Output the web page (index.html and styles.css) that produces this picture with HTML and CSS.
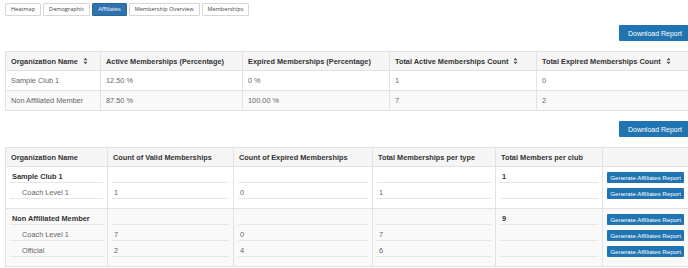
FILE: index.html
```html
<!DOCTYPE html>
<html lang="en">
<head>
    <meta charset="UTF-8">
    <meta name="viewport" content="width=device-width, initial-scale=1.0">
    <title>Affiliates</title>
    <link rel="stylesheet" href="styles.css">
</head>
<body>
    <div class="tabs">
        <button class="tab">Heatmap</button>
        <button class="tab">Demographic</button>
        <button class="tab active">Affiliates</button>
        <button class="tab">Membership Overview</button>
        <button class="tab">Memberships</button>
    </div>

    <div class="toolbar">
        <button class="download-button">Download Report</button>
    </div>

    <!-- Summary table -->
    <table class="report summary">
        <colgroup>
            <col style="width:95px">
            <col style="width:142px">
            <col style="width:147px">
            <col style="width:147px">
            <col>
        </colgroup>
        <thead>
            <tr>
                <th>Organization Name <span class="sort"><svg viewBox="0 0 5 8" width="5" height="8"><path d="M0.5 3.2 L2.5 0.8 L4.5 3.2 Z M0.5 4.8 L2.5 7.2 L4.5 4.8 Z"/></svg></span></th>
                <th>Active Memberships (Percentage)</th>
                <th>Expired Memberships (Percentage)</th>
                <th>Total Active Memberships Count <span class="sort"><svg viewBox="0 0 5 8" width="5" height="8"><path d="M0.5 3.2 L2.5 0.8 L4.5 3.2 Z M0.5 4.8 L2.5 7.2 L4.5 4.8 Z"/></svg></span></th>
                <th>Total Expired Memberships Count <span class="sort"><svg viewBox="0 0 5 8" width="5" height="8"><path d="M0.5 3.2 L2.5 0.8 L4.5 3.2 Z M0.5 4.8 L2.5 7.2 L4.5 4.8 Z"/></svg></span></th>
            </tr>
        </thead>
        <tbody>
            <tr>
                <td>Sample Club 1</td>
                <td>12.50 %</td>
                <td>0 %</td>
                <td>1</td>
                <td>0</td>
            </tr>
            <tr>
                <td>Non Affiliated Member</td>
                <td>87.50 %</td>
                <td>100.00 %</td>
                <td>7</td>
                <td>2</td>
            </tr>
        </tbody>
    </table>

    <div class="toolbar second">
        <button class="download-button">Download Report</button>
    </div>

    <!-- Detail table, one row per club -->
    <table class="report detail">
        <colgroup>
            <col style="width:102px">
            <col style="width:126px">
            <col style="width:139px">
            <col style="width:123px">
            <col style="width:107px">
            <col>
        </colgroup>
        <thead>
            <tr>
                <th>Organization Name</th>
                <th>Count of Valid Memberships</th>
                <th>Count of Expired Memberships</th>
                <th>Total Memberships per type</th>
                <th>Total Members per club</th>
                <th></th>
            </tr>
        </thead>
        <tbody>
            <tr>
                <td>
                    <div class="item club">Sample Club 1</div>
                    <div class="item sub">Coach Level 1</div>
                </td>
                <td>
                    <div class="item"></div>
                    <div class="item">1</div>
                </td>
                <td>
                    <div class="item"></div>
                    <div class="item">0</div>
                </td>
                <td>
                    <div class="item"></div>
                    <div class="item">1</div>
                </td>
                <td>
                    <div class="item club">1</div>
                    <div class="item"></div>
                </td>
                <td class="actions">
                    <div class="action"><button class="generate-button">Generate Affiliates Report</button></div>
                    <div class="action"><button class="generate-button">Generate Affiliates Report</button></div>
                </td>
            </tr>
            <tr>
                <td>
                    <div class="item club">Non Affiliated Member</div>
                    <div class="item sub">Coach Level 1</div>
                    <div class="item sub">Official</div>
                </td>
                <td>
                    <div class="item"></div>
                    <div class="item">7</div>
                    <div class="item">2</div>
                </td>
                <td>
                    <div class="item"></div>
                    <div class="item">0</div>
                    <div class="item">4</div>
                </td>
                <td>
                    <div class="item"></div>
                    <div class="item">7</div>
                    <div class="item">6</div>
                </td>
                <td>
                    <div class="item club">9</div>
                    <div class="item"></div>
                    <div class="item"></div>
                </td>
                <td class="actions">
                    <div class="action"><button class="generate-button">Generate Affiliates Report</button></div>
                    <div class="action"><button class="generate-button">Generate Affiliates Report</button></div>
                    <div class="action"><button class="generate-button">Generate Affiliates Report</button></div>
                </td>
            </tr>
        </tbody>
    </table>
</body>
</html>
```

FILE: styles.css
```css
body {
    margin: 0;
    padding: 0;
    font-family: "Liberation Sans", Arial, sans-serif;
    font-size: 7.35px;
    color: #555;
    background: #fff;
    overflow: hidden;
}

.tabs {
    display: flex;
    gap: 2px;
    padding: 3px 0 0 5px;
}

.tab {
    height: 13px;
    min-width: 36px;
    padding: 0 5px;
    font-family: "Open Sans", sans-serif;
    font-size: 5.6px;
    color: #444;
    background: #fff;
    border: 1px solid #d6d6d6;
    border-radius: 1px;
    line-height: 11px;
    cursor: pointer;
}

.tab.active {
    min-width: 0;
    background: #2f72ae;
    border-color: #2a679e;
    color: #fff;
}

.toolbar {
    display: flex;
    justify-content: flex-end;
    margin: 9px -3px 10px 0;
}

.toolbar.second {
    margin-top: 10px;
}

.download-button {
    width: 72px;
    height: 16px;
    padding: 0;
    font-family: "Liberation Sans", Arial, sans-serif;
    font-size: 7px;
    color: #fff;
    background: #1f74b1;
    border: none;
    border-radius: 1px;
    cursor: pointer;
}

.report {
    border-collapse: collapse;
    margin-left: 5px;
    width: 686px;
    table-layout: fixed;
}

.report th,
.report td {
    border: 1px solid #e2e2e2;
    text-align: left;
    white-space: nowrap;
    overflow: hidden;
}

.report th {
    background: #f5f5f5;
    color: #333;
    font-weight: bold;
    height: 18px;
    padding: 0 5px;
}

.summary td {
    height: 19px;
    padding: 0 5px;
    color: #666;
}

.summary tbody tr:nth-child(even) td {
    background: #f9f9f9;
}

.sort {
    display: inline-block;
    margin-left: 3px;
    vertical-align: -1px;
}

.sort svg {
    display: block;
    fill: #555;
}

.detail td {
    vertical-align: top;
    padding: 0 4px 9px;
    color: #666;
}

.detail tbody tr:nth-child(even) td {
    background: #f9f9f9;
}

.item {
    height: 16px;
    box-sizing: border-box;
    padding: 5px 0 0 2px;
    line-height: 9px;
    border-bottom: 1px solid #e6e6e6;
}

.item.club {
    font-weight: bold;
    color: #333;
}

.item.sub {
    padding-left: 12px;
}

.action {
    height: 16px;
    display: flex;
    align-items: flex-end;
}

.generate-button {
    width: 77px;
    height: 11px;
    padding: 0;
    font-family: "Liberation Sans", Arial, sans-serif;
    font-size: 6.2px;
    color: #fff;
    background: #1f74b1;
    border: none;
    border-radius: 1px;
    line-height: 11px;
    cursor: pointer;
}
```
